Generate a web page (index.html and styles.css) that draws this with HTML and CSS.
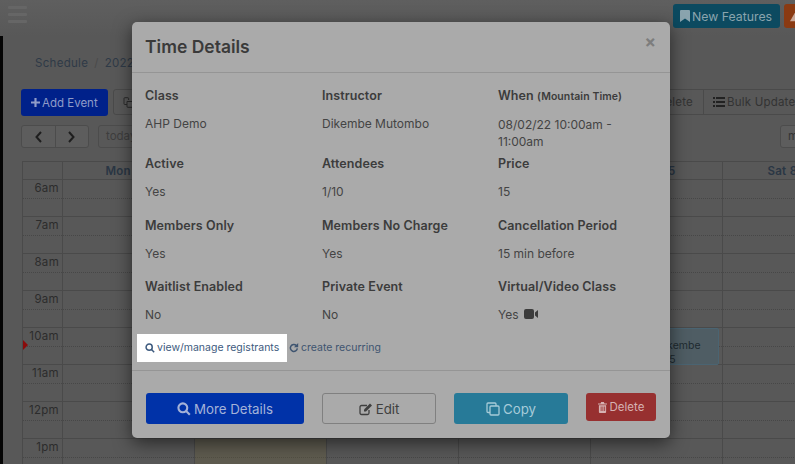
FILE: index.html
```html
<!DOCTYPE html>
<html lang="en">
<head>
<meta charset="utf-8">
<title>Time Details</title>
<link rel="stylesheet" href="styles.css">
</head>
<body>
<div class="page">
  <header class="topbar">
    <div class="burger"><span></span><span></span><span></span></div>
    <div class="top-actions">
      <a class="pill pill-teal"><svg class="ico-book" viewBox="0 0 10 12"><path d="M0 1a1 1 0 0 1 1-1h8a1 1 0 0 1 1 1v11L5 8.500 0 12z"/></svg>New Features</a>
      <a class="pill pill-orange"><svg class="ico-warn" viewBox="0 0 14 14"><path d="M7 1l7 12H0z"/></svg></a>
    </div>
  </header>
  <div class="shell">
    <div class="strip"></div>
    <main class="main">
      <nav class="crumbs"><span>Schedule</span><i>/</i><b>2022</b></nav>
      <div class="toolbar">
        <a class="btn-add"><svg class="ico-plus" viewBox="0 0 10 10"><path d="M3.800 0h2.400v3.800H10v2.400H6.200V10H3.800V6.200H0V3.800h3.800z"/></svg>Add Event</a>
        <a class="tool tool-first"><svg class="ico-clone" viewBox="0 0 11 11"><path d="M1 4.500V1.500A.8.8 0 0 1 1.800.700h3A.8.8 0 0 1 5.600 1.500V3M4 4.500h5.200a.8.8 0 0 1 .8.8V9.500a.8.8 0 0 1-.8.8H4.800a.8.8 0 0 1-.8-.8zM4 7.500H1.800A.8.8 0 0 1 1 6.700V4.500"/></svg></a>
        <div class="tool-right">
          <a class="tool tool-del">Bulk Delete</a>
          <a class="tool tool-bulk"><svg class="ico-list" viewBox="0 0 12 10"><path d="M0 0h2v2H0zM3 0h9v2H3zM0 4h2v2H0zM3 4h9v2H3zM0 8h2v2H0zM3 8h9v2H3z"/></svg>Bulk Update</a>
        </div>
      </div>
      <div class="nav-row">
        <div class="pager">
          <a><svg viewBox="0 0 8 12"><path d="M6.500 1L2 6l4.500 5" /></svg></a>
          <a><svg viewBox="0 0 8 12"><path d="M1.500 1L6 6l-4.500 5" /></svg></a>
        </div>
        <a class="today">today</a>
        <a class="view-btn">month</a>
      </div>
      <section class="calendar">
        <div class="cal-row cal-head">
          <div></div><div>Mon 8/1</div><div></div><div></div><div></div><div>Fri 8/5</div><div>Sat 8/6</div>
        </div>
        <div class="cal-row"><div class="time">6am</div><div></div><div class="now"></div><div></div><div></div><div></div><div></div></div>
        <div class="cal-row"><div class="time">7am</div><div></div><div class="now"></div><div></div><div></div><div></div><div></div></div>
        <div class="cal-row"><div class="time">8am</div><div></div><div class="now"></div><div></div><div></div><div></div><div></div></div>
        <div class="cal-row"><div class="time">9am</div><div></div><div class="now"></div><div></div><div></div><div></div><div></div></div>
        <div class="cal-row"><div class="time">10am<span class="marker"></span></div><div></div><div class="now"></div><div></div><div></div><div class="event-cell"><div class="event">Dikembe<br>1/15</div></div><div></div></div>
        <div class="cal-row"><div class="time">11am</div><div></div><div class="now"></div><div></div><div></div><div></div><div></div></div>
        <div class="cal-row"><div class="time">12pm</div><div></div><div class="now"></div><div></div><div></div><div></div><div></div></div>
        <div class="cal-row"><div class="time">1pm</div><div></div><div class="now"></div><div></div><div></div><div></div><div></div></div>
      </section>
    </main>
  </div>
</div>

<div class="modal">
  <div class="modal-head">
    <h2>Time Details</h2>
    <span class="close">×</span>
  </div>
  <div class="modal-body">
    <div class="details">
      <div class="cell"><h4>Class</h4><p>AHP Demo</p></div>
      <div class="cell"><h4>Instructor</h4><p>Dikembe Mutombo</p></div>
      <div class="cell"><h4>When <small>(Mountain Time)</small></h4><p>08/02/22 10:00am - 11:00am</p></div>
      <div class="cell"><h4>Active</h4><p>Yes</p></div>
      <div class="cell"><h4>Attendees</h4><p>1/10</p></div>
      <div class="cell"><h4>Price</h4><p>15</p></div>
      <div class="cell"><h4>Members Only</h4><p>Yes</p></div>
      <div class="cell"><h4>Members No Charge</h4><p>Yes</p></div>
      <div class="cell"><h4>Cancellation Period</h4><p>15 min before</p></div>
      <div class="cell"><h4>Waitlist Enabled</h4><p>No</p></div>
      <div class="cell"><h4>Private Event</h4><p>No</p></div>
      <div class="cell"><h4>Virtual/Video Class</h4><p>Yes <svg class="cam" viewBox="0 0 14 10"><path d="M2 0h6a2 2 0 0 1 2 2v6a2 2 0 0 1-2 2H2a2 2 0 0 1-2-2V2a2 2 0 0 1 2-2zM11 3.500L14 1v8l-3-2.500z"/></svg></p></div>
    </div>
    <div class="links">
      <a class="link link-hi"><svg class="ico-s" viewBox="0 0 12 12"><circle cx="5" cy="5" r="3.700"/><path d="M7.800 7.800L11 11"/></svg>view/manage registrants</a>
      <a class="link"><svg class="ico-s" viewBox="0 0 12 12"><path d="M10 6.500A4.200 4.200 0 1 1 8.800 3"/><path class="fill" d="M11 0v5H6z"/></svg>create recurring</a>
    </div>
  </div>
  <div class="modal-foot">
    <a class="mbtn mbtn-blue"><svg class="ico-m" viewBox="0 0 12 12"><circle cx="5" cy="5" r="3.800"/><path d="M7.800 7.800L11 11"/></svg>More Details</a>
    <a class="mbtn mbtn-plain"><svg class="ico-m" viewBox="0 0 14 13"><path d="M10 7.500V10.500a1.500 1.500 0 0 1-1.500 1.500h-6A1.500 1.500 0 0 1 1 10.500v-6A1.500 1.500 0 0 1 2.500 3H8"/><path class="fill" d="M5 7l6-6 2 2-6 6H5z"/></svg>Edit</a>
    <a class="mbtn mbtn-teal"><svg class="ico-m" viewBox="0 0 14 14"><rect x="4" y="4" width="9" height="9" rx="1"/><path d="M4 10.500H2a1 1 0 0 1-1-1V2a1 1 0 0 1 1-1h7a1 1 0 0 1 1 1v2"/></svg>Copy</a>
    <a class="mbtn mbtn-red"><svg class="ico-t" viewBox="0 0 10 12"><path d="M3.500 0h3l.7 1.500H10v1.200H0V1.500h2.800zM1 3.500h8V11a1 1 0 0 1-1 1H2a1 1 0 0 1-1-1zM3 5v5h.9V5zM5 5v5h.9V5zM7 5v5h.9V5z" fill-rule="evenodd"/></svg>Delete</a>
  </div>
</div>
</body>
</html>
```

FILE: styles.css
```css
* { box-sizing: border-box; }
html, body { margin: 0; height: 100%; }
body {
  width: 795px;
  height: 464px;
  overflow: hidden;
  background: #585858;
  font-family: Inter, "Open Sans", sans-serif;
  color: #333;
  position: relative;
}
a { display: inline-block; text-decoration: none; }
.page { height: 464px; overflow: hidden; }

/* top bar */
.topbar {
  height: 36px;
  display: flex;
  justify-content: space-between;
  padding: 4px 0 0 8px;
  background: linear-gradient(#5f5f5f, #585858);
}
.burger { display: flex; flex-direction: column; gap: 4px; padding-top: 2px; width: 19px; }
.burger span { height: 3px; background: #666; border-radius: 1px; }
.top-actions { display: flex; gap: 4px; width: 122px; flex: none; }
.pill {
  height: 24px;
  display: flex;
  align-items: center;
  border-radius: 3px;
  font-size: 12.300px;
  white-space: nowrap;
  flex: none;
}
.pill-teal { background: #0c4a60; color: #8aa4ae; width: 107px; padding-left: 7px; }
.pill-orange { background: #8a3a12; width: 70px; padding-left: 6px; }
.ico-book { width: 10px; height: 12px; fill: currentColor; margin-right: 2px; flex: none; }
.ico-warn { width: 12px; height: 12px; fill: #c9a898; flex: none; }

/* shell */
.shell { display: flex; height: 428px; }
.strip { width: 3px; background: #050505; flex: none; }
.main { flex: none; width: 900px; padding-left: 18px; }
.crumbs {
  height: 20px;
  margin: 17px 0 0 14px;
  font-size: 11.500px;
  letter-spacing: .3px;
  line-height: 20px;
  color: #2f3a47;
  display: flex;
  gap: 6px;
}
.crumbs i { color: #4a4a4a; font-style: normal; }
.crumbs b { font-weight: 400; }

.toolbar { display: flex; margin-top: 16px; height: 27px; width: 860px; }
.btn-add {
  display: flex;
  align-items: center;
  width: 87px;
  height: 27px;
  padding-left: 10px;
  background: #00218a;
  border-radius: 3px;
  color: #8f9cc8;
  font-size: 11.500px;
}
.ico-plus { width: 9px; height: 9px; margin-right: 2px; fill: currentColor; flex: none; }
.tool {
  height: 26px;
  border: 1px solid #4a4a4a;
  color: #333;
  font-size: 11.500px;
  letter-spacing: .2px;
  white-space: nowrap;
  display: flex;
  align-items: center;
}
.tool-first { margin-left: 5px; width: 100px; padding-left: 9px; border-radius: 3px 0 0 3px; }
.ico-clone { width: 11px; height: 11px; fill: none; stroke: #2a2a2a; stroke-width: 1; }
.tool-right { display: flex; margin-left: 400px; }
.tool-del { width: 90px; border-right: 0; justify-content: flex-end; padding-right: 10px; }
.tool-bulk { width: 110px; padding-left: 9px; }
.ico-list { width: 12px; height: 10px; fill: #222; margin-right: 2px; flex: none; }

.nav-row { display: flex; margin-top: 9px; height: 23px; width: 819px; }
.pager { display: flex; width: 68px; border: 1px solid #4c4c4c; border-radius: 3px; background: #5d5d5d; }
.pager a { flex: 1; display: flex; align-items: center; justify-content: center; }
.pager a + a { border-left: 1px solid #4c4c4c; }
.pager svg { width: 9px; height: 12px; fill: none; stroke: #1e1e1e; stroke-width: 2; }
.today {
  margin-left: 9px;
  width: 60px;
  border: 1px solid #4c4c4c;
  border-radius: 3px;
  padding-left: 7px;
  line-height: 21px;
  font-size: 11.500px;
  color: #3e3e3e;
}
.view-btn {
  margin-left: auto;
  width: 60px;
  border: 1px solid #4c4c4c;
  border-radius: 3px;
  padding-left: 7px;
  line-height: 21px;
  font-size: 11.500px;
  color: #333;
  background: #5d5d5d;
}

/* calendar */
.calendar { margin: 13px 0 0 1px; width: 900px; border-left: 1px solid #4a4a4a; border-top: 1px solid #4a4a4a; }
.cal-row {
  display: grid;
  grid-template-columns: 40px 132px 132px 132px 132px 132px 132px;
  height: 37px;
  border-bottom: 1px solid #4a4a4a;
  background-image: linear-gradient(to right, #474747 50%, transparent 50%);
  background-size: 2px 1px;
  background-position: 0 18px;
  background-repeat: repeat-x;
}
.cal-row > div { border-right: 1px solid #4a4a4a; }
.cal-head {
  height: 18px;
  background-image: none;
  font-size: 11.500px;
  letter-spacing: .3px;
  font-weight: 600;
  line-height: 18px;
  color: #2a3644;
  text-align: center;
}
.time { position: relative; font-size: 11.500px; letter-spacing: .3px; text-align: right; padding-right: 3px; line-height: 14px; padding-top: 1px; color: #2c2c2c; }
.now { background: rgba(110, 100, 60, .3); }
.marker {
  position: absolute;
  left: 0;
  top: 12px;
  border-left: 5px solid #8a0a0a;
  border-top: 5px solid transparent;
  border-bottom: 5px solid transparent;
}
.event-cell { position: relative; }
.event {
  position: absolute;
  left: 1px;
  right: 3px;
  top: 0;
  height: 37px;
  background: #4f5d64;
  border: 1px solid #4a6472;
  border-radius: 2px;
  padding: 10px 0 0 64px;
  font-size: 10.500px;
  line-height: 14px;
  color: #1e2a30;
  white-space: nowrap;
}

/* modal */
.modal {
  position: absolute;
  left: 132px;
  top: 22px;
  width: 538px;
  height: 416px;
  background: #aaa;
  border-radius: 5px;
  box-shadow: 0 5px 18px rgba(0, 0, 0, .55);
  color: #3f3f3f;
  display: flex;
  flex-direction: column;
}
.modal-head {
  height: 51px;
  flex: none;
  border-bottom: 1px solid #959595;
  display: flex;
  justify-content: space-between;
  padding: 15px 14px 0 13px;
}
.modal-head h2 { margin: 0; font-size: 17.500px; line-height: 20px; font-weight: 600; color: #3a3a3a; }
.close { font-size: 17px; line-height: 10px; font-weight: 700; color: #7d7d7d; }
.modal-body { height: 298px; flex: none; padding: 14px 13px 0 13px; border-bottom: 1px solid #959595; }
.details { display: grid; grid-template-columns: 177px 176px 160px; align-items: start; }
.cell { min-height: 61.500px; padding-bottom: 5px; }
.cell h4 { margin: 0 0 11px; font-size: 12.500px; letter-spacing: .08px; line-height: 17px; font-weight: 600; color: #3c3c3c; white-space: nowrap; }
.cell small { font-size: 10.500px; font-weight: 600; }
.cell p { margin: 0; font-size: 12px; line-height: 17px; color: #444; }
.cam { width: 14px; height: 10px; fill: #3c3c3c; margin-left: 2px; }

.links { display: flex; align-items: center; margin: -6px 0 0 -8px; }
.link { display: flex; align-items: center; height: 28px; font-size: 10.500px; color: #3e5470; white-space: nowrap; }
.link-hi { width: 150px; padding-left: 8px; background: #fff; margin-right: 2px; color: #3d5a7e; }
.ico-s { width: 10px; height: 10px; margin-right: 2px; fill: none; stroke: currentColor; stroke-width: 1.800; flex: none; }
.ico-s .fill { fill: currentColor; stroke: none; }

.modal-foot { display: flex; padding: 22px 14px 0 14px; align-items: flex-start; gap: 18px; }
.mbtn {
  display: flex;
  align-items: center;
  justify-content: center;
  height: 31px;
  border-radius: 3px;
  font-size: 13.300px;
  white-space: nowrap;
}
.ico-m { width: 14px; height: 14px; margin-right: 3px; fill: none; stroke: currentColor; stroke-width: 1.300; flex: none; }
.ico-m .fill { fill: currentColor; stroke: none; }
.ico-t { width: 9px; height: 11px; margin-right: 3px; fill: currentColor; flex: none; }
.mbtn-blue { width: 158px; background: #0032a8; color: #a4b2d8; }
.mbtn-blue .ico-m { stroke-width: 1.800; }
.mbtn-plain { width: 114px; border: 1px solid #808080; color: #3f3f3f; }
.mbtn-teal { width: 114px; background: #277a98; color: #a6cbd8; }
.mbtn-red { width: 70px; height: 28px; background: #973030; color: #d6b2b2; font-size: 11.500px; }
```
